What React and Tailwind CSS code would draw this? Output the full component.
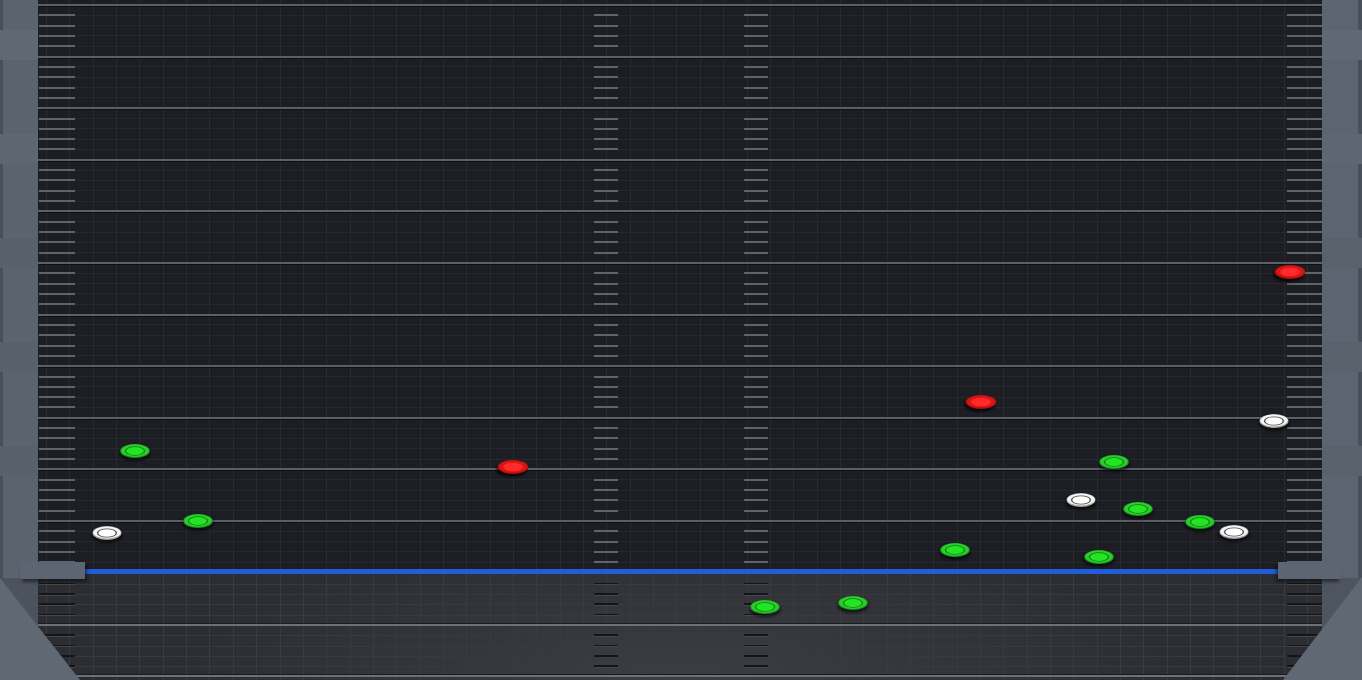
import React from "react";

const dots = [
  { x: 135, y: 451, c: "g" },
  { x: 198, y: 521, c: "g" },
  { x: 107, y: 533, c: "w" },
  { x: 513, y: 467, c: "r" },
  { x: 765, y: 607, c: "g" },
  { x: 853, y: 603, c: "g" },
  { x: 955, y: 550, c: "g" },
  { x: 981, y: 402, c: "r" },
  { x: 1114, y: 462, c: "g" },
  { x: 1081, y: 500, c: "w" },
  { x: 1138, y: 509, c: "g" },
  { x: 1099, y: 557, c: "g" },
  { x: 1200, y: 522, c: "g" },
  { x: 1234, y: 532, c: "w" },
  { x: 1274, y: 421, c: "w" },
  { x: 1290, y: 272, c: "r" },
];

function Dot({ x, y, c }) {
  if (c === "g") {
    return (
      <g>
        <ellipse cx={x} cy={y + 2.5} rx="15.5" ry="7.5" fill="#000" opacity="0.6" filter="url(#blur2)" />
        <ellipse cx={x} cy={y} rx="14.8" ry="7.1" fill="#15951a" />
        <ellipse cx={x} cy={y - 0.4} rx="13.8" ry="6.3" fill="#2fcc30" />
        <ellipse cx={x} cy={y} rx="10.2" ry="4.7" fill="#0d830e" />
        <ellipse cx={x} cy={y} rx="8.9" ry="4" fill="#25e426" />
      </g>
    );
  }
  if (c === "w") {
    return (
      <g>
        <ellipse cx={x} cy={y + 2.5} rx="15.5" ry="7.5" fill="#000" opacity="0.6" filter="url(#blur2)" />
        <ellipse cx={x} cy={y} rx="14.5" ry="6.9" fill="#a4a4a4" />
        <ellipse cx={x} cy={y - 0.5} rx="13.7" ry="6.1" fill="#f4f4f4" />
        <ellipse cx={x} cy={y} rx="10.1" ry="4.6" fill="#505050" />
        <ellipse cx={x} cy={y} rx="8.7" ry="3.8" fill="#ffffff" />
      </g>
    );
  }
  return (
    <g filter="url(#blur1)">
      <ellipse cx={x - 1.5} cy={y + 3} rx="15.5" ry="7" fill="#000" opacity="0.75" filter="url(#blur2)" />
      <ellipse cx={x} cy={y} rx="15.3" ry="7" fill="#b50c0c" />
      <ellipse cx={x} cy={y - 0.4} rx="13.8" ry="6.1" fill="#d91515" />
      <ellipse cx={x} cy={y} rx="9.8" ry="4.2" fill="#ff2b2b" />
    </g>
  );
}

function LeftRail() {
  return (
    <div className="flex w-[38px] shrink-0 flex-col bg-[#5a636e]">
      <div className="h-[30px] border-l-[3px] border-[#47505a]" />
      <div className="h-[30px] bg-[#5f6873]" />
      <div className="h-[74px] border-l-[3px] border-[#47505a]" />
      <div className="h-[30px] bg-[#5d6671]" />
      <div className="h-[74px] border-l-[3px] border-[#47505a]" />
      <div className="h-[30px] bg-[#57606b]" />
      <div className="h-[74px] border-l-[3px] border-[#47505a]" />
      <div className="h-[30px] bg-[#57606b]" />
      <div className="h-[74px] border-l-[3px] border-[#47505a]" />
      <div className="h-[30px] bg-[#57606b]" />
      <div className="h-[102px] border-l-[3px] border-[#47505a]" />
      <div className="flex-1 bg-[#4c535c]" />
    </div>
  );
}

function RightRail() {
  return (
    <div className="flex w-[40px] shrink-0 flex-col bg-[#5b6470]">
      <div className="h-[30px] border-r-[4px] border-[#48505a]" />
      <div className="h-[30px] bg-[#5f6874]" />
      <div className="h-[74px] border-r-[4px] border-[#48505a]" />
      <div className="h-[30px] bg-[#5d6672]" />
      <div className="h-[74px] border-r-[4px] border-[#48505a]" />
      <div className="h-[30px] bg-[#58616c]" />
      <div className="h-[74px] border-r-[4px] border-[#48505a]" />
      <div className="h-[30px] bg-[#58616c]" />
      <div className="h-[74px] border-r-[4px] border-[#48505a]" />
      <div className="h-[30px] bg-[#58616c]" />
      <div className="h-[102px] border-r-[4px] border-[#48505a]" />
      <div className="flex-1 bg-[#4e555e]" />
    </div>
  );
}

function TopTicks({ w }) {
  return (
    <div
      className={
        (w === 36 ? "w-[36px] " : w === 35 ? "w-[35px] " : "w-[24px] ") +
        "shrink-0 [background-image:repeating-linear-gradient(to_bottom,transparent_0px,transparent_14.3px,#5e636c_14.3px,#5e636c_16.3px,transparent_16.3px,transparent_24.6px,#5e636c_24.6px,#5e636c_26.6px,transparent_26.6px,transparent_34.9px,#5e636c_34.9px,#5e636c_36.9px,transparent_36.9px,transparent_45.2px,#5e636c_45.2px,#5e636c_47.2px,transparent_47.2px,transparent_51.6px)]"
      }
    />
  );
}

function BottomTicks({ w }) {
  return (
    <div
      className={
        (w === 36 ? "w-[36px] " : w === 35 ? "w-[35px] " : "w-[24px] ") +
        "shrink-0 [background-image:repeating-linear-gradient(to_bottom,transparent_0px,transparent_8.6px,#141518_8.6px,#141518_10.4px,#45474c_10.4px,#45474c_11.2px,transparent_11.2px,transparent_18.9px,#141518_18.9px,#141518_20.7px,#45474c_20.7px,#45474c_21.5px,transparent_21.5px,transparent_29.2px,#141518_29.2px,#141518_31px,#45474c_31px,#45474c_31.8px,transparent_31.8px,transparent_39.5px,#141518_39.5px,#141518_41.3px,#45474c_41.3px,#45474c_42.1px,transparent_42.1px,transparent_51.6px)]"
      }
    />
  );
}

export default function App() {
  return (
    <div className="relative flex h-[680px] w-[1362px] overflow-hidden bg-[#1d1f25] font-['Liberation_Sans',sans-serif]">
      <LeftRail />
      <div className="flex min-w-0 flex-1 flex-col">
        {/* upper dark field */}
        <div className="flex h-[569px] shrink-0 bg-[#1c1e24] [background-image:repeating-linear-gradient(to_bottom,transparent_0px,transparent_4px,#5a5f68_4px,#5a5f68_6px,#0f1013_6px,#0f1013_7px,transparent_7px,transparent_14.8px,#25282e_14.8px,#25282e_15.8px,transparent_15.8px,transparent_25.1px,#25282e_25.1px,#25282e_26.1px,transparent_26.1px,transparent_35.4px,#25282e_35.4px,#25282e_36.4px,transparent_36.4px,transparent_45.7px,#25282e_45.7px,#25282e_46.7px,transparent_46.7px,transparent_51.6px),repeating-linear-gradient(to_right,transparent_0px,transparent_8px,#272a31_8px,#272a31_9px,transparent_9px,transparent_23.35px)]">
          <div className="w-[1px] shrink-0" />
          <TopTicks w={36} />
          <div className="w-[519px] shrink-0" />
          <TopTicks w={24} />
          <div className="w-[126px] shrink-0" />
          <TopTicks w={24} />
          <div className="flex-1" />
          <TopTicks w={35} />
        </div>
        {/* blue baseline */}
        <div className="h-[5px] shrink-0 bg-[#1f5ddb] shadow-[0_1px_1px_rgba(0,0,0,0.6)]" />
        {/* lower field */}
        <div className="flex flex-1 bg-[#2c2e33] [background-image:repeating-linear-gradient(to_bottom,transparent_0px,transparent_48.6px,#1b1c1f_48.6px,#1b1c1f_49.6px,#6d7076_49.6px,#6d7076_51.6px),repeating-linear-gradient(to_bottom,transparent_0px,transparent_9.6px,#383a3f_9.6px,#383a3f_10.6px,transparent_10.6px,transparent_19.9px,#383a3f_19.9px,#383a3f_20.9px,transparent_20.9px,transparent_30.2px,#383a3f_30.2px,#383a3f_31.2px,transparent_31.2px,transparent_40.5px,#383a3f_40.5px,#383a3f_41.5px,transparent_41.5px,transparent_51.6px),repeating-linear-gradient(to_right,transparent_0px,transparent_8px,#393b41_8px,#393b41_9px,transparent_9px,transparent_23.35px),radial-gradient(ellipse_520px_150px_at_50%_100%,#3d3e43,#2b2d32)]">
          <div className="w-[1px] shrink-0" />
          <BottomTicks w={36} />
          <div className="w-[519px] shrink-0" />
          <BottomTicks w={24} />
          <div className="w-[126px] shrink-0" />
          <BottomTicks w={24} />
          <div className="flex-1" />
          <BottomTicks w={35} />
        </div>
      </div>
      <RightRail />

      {/* bottom corner wedges */}
      <svg className="absolute left-0 top-[576px]" width="82" height="104" viewBox="0 0 82 104">
        <polygon points="0,2 80,104 0,104" fill="#5f6873" />
      </svg>
      <svg className="absolute left-[1280px] top-[576px]" width="82" height="104" viewBox="0 0 82 104">
        <polygon points="82,1 82,104 3,104" fill="#5f6873" />
      </svg>

      {/* baseline handles */}
      <div className="absolute left-[20px] top-[562px] h-[17px] w-[65px] bg-[#5c6571] shadow-[2px_3px_3px_rgba(0,0,0,0.45)]" />
      <div className="absolute left-[1278px] top-[562px] h-[17px] w-[63px] bg-[#5c6571] shadow-[-2px_3px_3px_rgba(0,0,0,0.45)]" />

      {/* data points */}
      <svg className="pointer-events-none absolute inset-0" width="1362" height="680" viewBox="0 0 1362 680">
        <defs>
          <filter id="blur2" x="-50%" y="-50%" width="200%" height="200%">
            <feGaussianBlur stdDeviation="1.6" />
          </filter>
          <filter id="blur1" x="-50%" y="-50%" width="200%" height="200%">
            <feGaussianBlur stdDeviation="0.6" />
          </filter>
        </defs>
        {dots.map((d, i) => (
          <Dot key={i} {...d} />
        ))}
      </svg>
    </div>
  );
}
